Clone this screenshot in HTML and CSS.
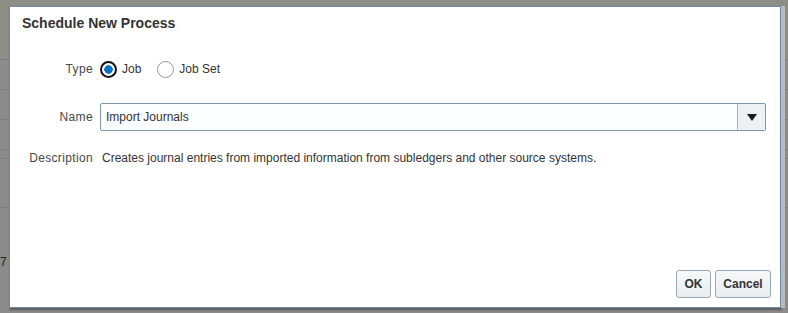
FILE: index.html
```html
<!DOCTYPE html>
<html lang="en">
  <head>
    <meta charset="UTF-8" />
    <title>Schedule New Process</title>
    <link rel="stylesheet" href="styles.css">
  </head>
  <body>
    <!-- page behind the modal glass pane -->
    <div class="backdrop">
      <div class="bg-top"></div>
      <div class="bg-row"></div>
      <div class="bg-row"></div>
      <div class="bg-row"></div>
      <div class="bg-row thin"></div>
      <div class="bg-row tall"></div>
      <div class="bg-row last"><span class="bg-num">7</span></div>
    </div>

    <div class="dialog">
      <h1 class="dialog-title">Schedule New Process</h1>

      <div class="form">
        <div class="field type-row">
          <span class="label">Type</span>
          <label class="radio checked"><span class="dot"></span>Job</label>
          <label class="radio"><span class="dot"></span>Job Set</label>
        </div>

        <div class="field name-row">
          <span class="label">Name</span>
          <div class="select">
            <span class="select-value">Import Journals</span>
            <span class="select-btn">
              <svg width="10" height="7" viewBox="0 0 10 7"><path d="M0 0h10L5 7z" fill="#1a1a1a"/></svg>
            </span>
          </div>
        </div>

        <div class="field desc-row">
          <span class="label">Description</span>
          <span class="desc">Creates journal entries from imported information from subledgers and other source systems.</span>
        </div>
      </div>

      <div class="buttons">
        <button class="btn btn-ok">OK</button>
        <button class="btn btn-cancel">Cancel</button>
      </div>
    </div>
  </body>
</html>
```

FILE: styles.css
```css
body {
  margin: 0;
  width: 788px;
  height: 313px;
  overflow: hidden;
  position: relative;
  background-color: #8b8b8b;
  font-family: "Liberation Sans", Arial, sans-serif;
  font-size: 12px;
  color: #333;
}

.backdrop {
  display: flex;
  flex-direction: column;
}

.bg-top {
  height: 59px;
  background-color: #8e8d86;
  border-bottom: 1px solid #7f7f7f;
}

.bg-row {
  height: 29px;
  border-bottom: 1px solid #7e7e7e;
}

.bg-row.thin {
  height: 8px;
}

.bg-row.tall {
  height: 48px;
}

.bg-row.last {
  border-bottom: none;
  padding-top: 47px;
}

.bg-num {
  display: block;
  font-size: 12px;
  line-height: 14px;
  color: #222;
}

.dialog {
  position: absolute;
  left: 9px;
  top: 6px;
  width: 770px;
  height: 300px;
  background: #fff;
  border: 1px solid #6f8ba3;
  box-shadow: 4px 0 0 #b8babb, 1px 2px 2px rgba(0, 0, 0, 0.35);
  display: flex;
  flex-direction: column;
}

.dialog-title {
  margin: 0;
  padding: 8px 0 0 12px;
  font-size: 14px;
  font-weight: bold;
  color: #333;
  line-height: 16px;
}

.form {
  padding-top: 29px;
  display: flex;
  flex-direction: column;
}

.field {
  display: flex;
  align-items: center;
}

.label {
  width: 83px;
  text-align: right;
  padding-right: 7px;
  color: #474747;
  letter-spacing: 0.35px;
}

.type-row {
  height: 18px;
}

.radio {
  display: flex;
  align-items: center;
  margin-right: 16px;
}

.dot {
  box-sizing: border-box;
  width: 17px;
  height: 17px;
  border-radius: 50%;
  border: 1px solid #8b9aa6;
  background: #fff;
  margin-right: 5px;
}

.radio.checked .dot {
  border: 2px solid #111;
  background: radial-gradient(circle, #0572ce 0 4px, #fff 4.5px);
}

.name-row {
  margin-top: 25px;
}

.select {
  flex: 1;
  display: flex;
  height: 28px;
  margin-right: 14px;
  box-sizing: border-box;
  border: 1px solid #7f95a8;
  border-radius: 2px;
  background: #fcfdfe;
}

.select-value {
  flex: 1;
  padding-left: 5px;
  line-height: 26px;
}

.select-btn {
  width: 27px;
  border-left: 1px solid #a8b4bf;
  background: #eef1f4;
  display: flex;
  align-items: center;
  justify-content: center;
}

.desc-row {
  margin-top: 20px;
}

.desc {
  padding-left: 2px;
}

.buttons {
  margin-top: auto;
  display: flex;
  justify-content: flex-end;
  gap: 4px;
  padding: 0 9px 9px 0;
}

.btn {
  height: 28px;
  padding: 0;
  font-family: "Liberation Sans", Arial, sans-serif;
  font-size: 12px;
  font-weight: bold;
  color: #333;
  background: linear-gradient(#f7f8f9, #e9edf0);
  border: 1px solid #9aa8b4;
  border-radius: 3px;
}

.btn-ok {
  width: 35px;
}

.btn-cancel {
  width: 56px;
}
```
